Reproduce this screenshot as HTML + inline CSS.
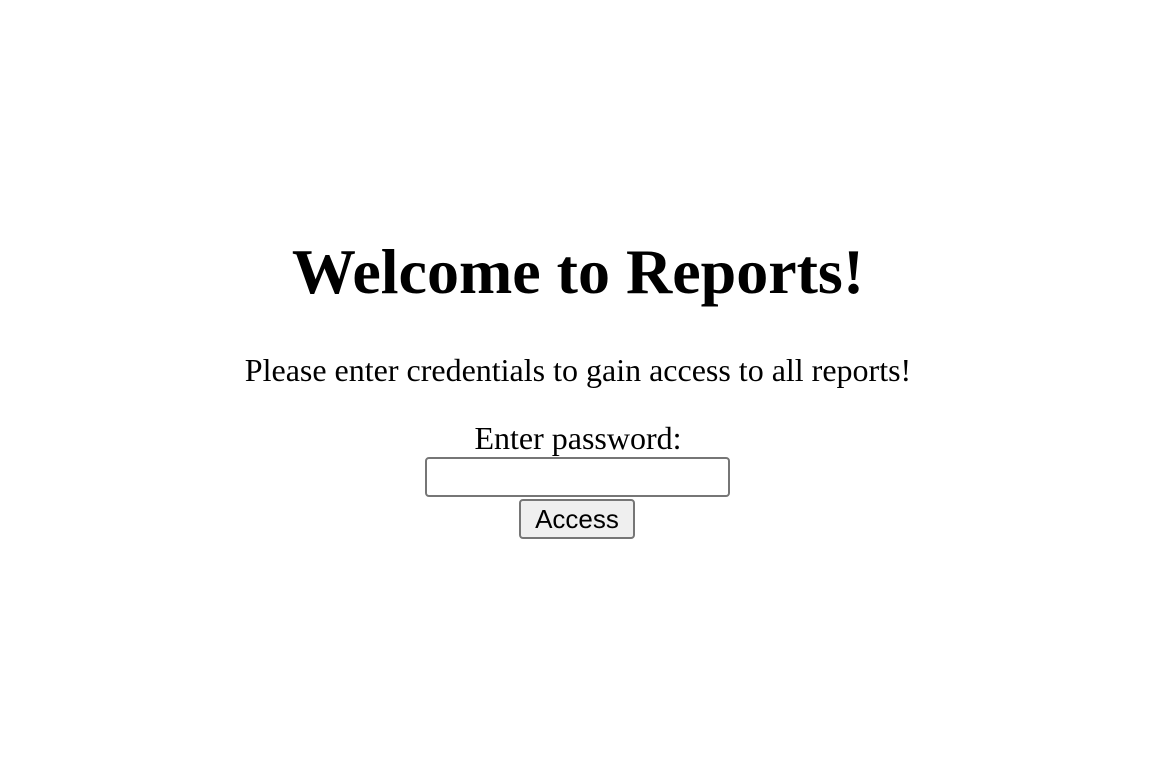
<!DOCTYPE html>
<html><head><style>
html,body{margin:0;padding:0;background:#fff;width:1156px;height:772px;overflow:hidden}
body{font-family:"Liberation Serif",serif;color:#000;position:relative}
h1{position:absolute;top:232px;left:0;width:1156px;margin:0;text-align:center;font-size:64px;line-height:80px;font-weight:bold}
p{position:absolute;top:350px;left:0;width:1156px;margin:0;text-align:center;font-size:32px;line-height:40px}
.lbl{position:absolute;top:418px;left:0;width:1156px;text-align:center;font-size:32px;line-height:40px}
.inp{position:absolute;left:425px;top:457px;width:301px;height:37px;border:2px solid #767676;border-radius:4px;box-sizing:border-box;width:305px;height:40px}
.btn{position:absolute;left:519px;top:499px;width:116px;height:40px;box-sizing:border-box;border:2px solid #767676;border-radius:4px;background:#efefef;font-family:"Liberation Sans",sans-serif;font-size:26px;line-height:36px;text-align:center}
</style></head><body>
<h1>Welcome to Reports!</h1>
<p>Please enter credentials to gain access to all reports!</p>
<div class="lbl">Enter password:</div>
<div class="inp"></div>
<div class="btn">Access</div>
</body></html>
